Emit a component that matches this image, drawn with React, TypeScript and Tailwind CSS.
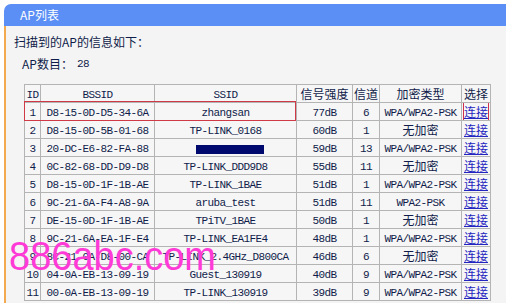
import React from "react";

const rows: [string, string, string, string, string, string][] = [
  ["1", "D8-15-0D-D5-34-6A", "zhangsan", "77dB", "6", "WPA/WPA2-PSK"],
  ["2", "D8-15-0D-5B-01-68", "TP-LINK_0168", "60dB", "1", "无加密"],
  ["3", "20-DC-E6-82-FA-88", "", "59dB", "13", "WPA/WPA2-PSK"],
  ["4", "0C-82-68-DD-D9-D8", "TP-LINK_DDD9D8", "55dB", "11", "无加密"],
  ["5", "D8-15-0D-1F-1B-AE", "TP-LINK_1BAE", "51dB", "1", "WPA/WPA2-PSK"],
  ["6", "9C-21-6A-F4-A8-9A", "aruba_test", "51dB", "11", "WPA2-PSK"],
  ["7", "DE-15-0D-1F-1B-AE", "TPiTV_1BAE", "50dB", "1", "无加密"],
  ["8", "9C-21-6A-EA-1F-E4", "TP-LINK_EA1FE4", "48dB", "1", "WPA/WPA2-PSK"],
  ["9", "8C-21-0A-D8-00-CA", "TP-LINK_2.4GHz_D800CA", "46dB", "6", "无加密"],
  ["10", "04-0A-EB-13-09-19", "Guest_130919", "40dB", "9", "WPA/WPA2-PSK"],
  ["11", "00-0A-EB-13-09-19", "TP-LINK_130919", "39dB", "9", "WPA/WPA2-PSK"],
];

const mono = "font-['Liberation_Mono',monospace] text-[11px] tracking-[-0.6px] leading-[14px]";
const cjk = "font-['Noto_Sans_CJK_SC','Liberation_Sans',sans-serif] text-[12px] leading-[14px]";
const cell = "border border-[#b4b4b4] text-center p-0 align-middle leading-[14px] overflow-hidden whitespace-nowrap";

function Txt({ v }: { v: string }) {
  const isCjk = /[\u4e00-\u9fff]/.test(v);
  return <span className={isCjk ? cjk : mono}>{v}</span>;
}

export default function App() {
  return (
    <div className="w-[506px] h-[303px] bg-white overflow-hidden relative text-[#101c4a]">
      <div className="pl-[4px] pt-[4px] h-full flex flex-col">
        <div className="h-[22px] shrink-0 bg-[#5b8ff5] rounded-tl-[7px] flex items-center pl-[16px]">
          <span className={`${cjk} text-white`}>AP列表</span>
        </div>
        <div className="flex-1 border-l-[2px] border-[#f3a950] bg-[#f4f4f4] pl-[8px]">
          <div className={`${cjk} mt-[9px]`}>扫描到的AP的信息如下：</div>
          <div className={`${cjk} mt-[8px] pl-[8px] flex`}>
            <span className="w-[55px]">AP数目：</span>
            <span className={mono}>28</span>
          </div>
          <div className="relative ml-[10px] mt-[13px] w-[466px]">
            <table className="border-collapse table-fixed bg-[#f6f6f6] w-[466px]">
              <colgroup>
                <col className="w-[16px]" />
                <col className="w-[114px]" />
                <col className="w-[142px]" />
                <col className="w-[56px]" />
                <col className="w-[27px]" />
                <col className="w-[82px]" />
                <col className="w-[29px]" />
              </colgroup>
              <thead>
                <tr className="h-[17px]">
                  <th className={`${cell} font-normal`}><span className={mono}>ID</span></th>
                  <th className={`${cell} font-normal`}><span className={mono}>BSSID</span></th>
                  <th className={`${cell} font-normal`}><span className={mono}>SSID</span></th>
                  <th className={`${cell} font-normal`}><span className={cjk}>信号强度</span></th>
                  <th className={`${cell} font-normal`}><span className={cjk}>信道</span></th>
                  <th className={`${cell} font-normal`}><span className={cjk}>加密类型</span></th>
                  <th className={`${cell} font-normal`}><span className={cjk}>选择</span></th>
                </tr>
              </thead>
              <tbody>
                {rows.map((r, i) => (
                  <tr key={i} className="h-[18px]">
                    <td className={cell}><Txt v={r[0]} /></td>
                    <td className={cell}><Txt v={r[1]} /></td>
                    <td className={cell}>
                      {i === 2 ? (
                        <span className="inline-block w-[68px] h-[9px] bg-[#000a6e] align-middle ml-[8px]" />
                      ) : (
                        <Txt v={r[2]} />
                      )}
                    </td>
                    <td className={cell}><Txt v={r[3]} /></td>
                    <td className={cell}><Txt v={r[4]} /></td>
                    <td className={cell}><Txt v={r[5]} /></td>
                    <td className={cell}>
                      <span
                        className={`${cjk} underline text-[#2424c0] ${
                          i === 0 ? "outline outline-1 outline-[#d0304a]" : ""
                        }`}
                      >
                        连接
                      </span>
                    </td>
                  </tr>
                ))}
              </tbody>
            </table>
            <div className="absolute left-0 top-[17px] w-[272px] h-[20px] border border-[#d03a46] pointer-events-none" />
          </div>
        </div>
      </div>
      <div className="absolute left-[9px] top-[233px] font-['Liberation_Sans',sans-serif] text-[40px] leading-[46px] text-[#ff3ad6] whitespace-nowrap scale-x-95 origin-left">
        886abc.com
      </div>
    </div>
  );
}
